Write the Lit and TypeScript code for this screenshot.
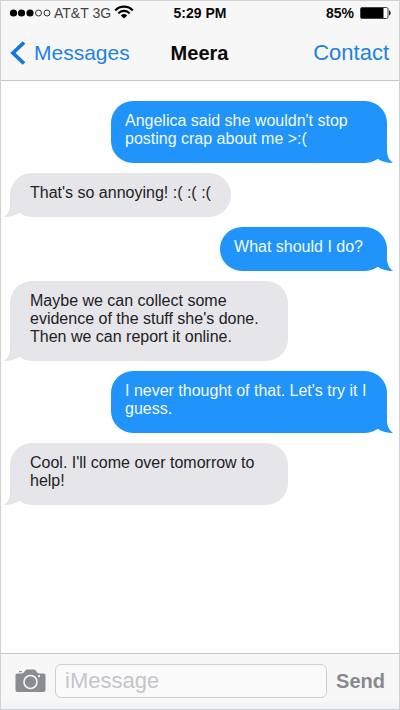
import { LitElement, html, css, svg } from "lit";
import { customElement, property, state } from "lit/decorators.js";
import { classMap } from "lit/directives/class-map.js";

interface Message {
  mine: boolean;
  text: string;
}

const MESSAGES: Message[] = [
  { mine: true, text: "Angelica said she wouldn't stop posting crap about me >:(" },
  { mine: false, text: "That's so annoying! :( :( :(" },
  { mine: true, text: "What should I do?" },
  { mine: false, text: "Maybe we can collect some evidence of the stuff she's done. Then we can report it online." },
  { mine: true, text: "I never thought of that. Let's try it I guess." },
  { mine: false, text: "Cool. I'll come over tomorrow to help!" },
];

/** Messages shorter than this fit on one line. */
const SHORT_LENGTH = 30;

@customElement("status-bar")
export class StatusBar extends LitElement {
  static styles = css`
    :host {
      display: grid;
      grid-template-columns: 1fr auto 1fr;
      align-items: center;
      height: 24px;
      padding: 0 8px;
      font-size: 14px;
      line-height: 24px;
      color: #0a0a0a;
    }
    .carrier, .power { display: flex; align-items: center; }
    .carrier { gap: 3px; color: #444; white-space: nowrap; }
    .power { justify-content: flex-end; gap: 5px; }
    .time, .power { font-weight: bold; }
    svg { display: block; flex: none; }
  `;

  render() {
    return html`
      <div class="carrier">
        <svg width="42" height="8" viewBox="0 0 42 8" aria-hidden="true">
          ${[4.5, 12.5, 21].map((x) => svg`<circle cx=${x} cy="4" r="3.6" fill="#000" />`)}
          ${[29.5, 38].map((x) => svg`<circle cx=${x} cy="4" r="3" fill="none" stroke="#333" stroke-width="1" />`)}
        </svg>
        <span>AT&amp;T 3G</span>
        <svg width="20" height="16" viewBox="0 0 20 16" aria-hidden="true">
          <g fill="none" stroke="#000" stroke-width="2.1">
            <path d="M1.2 5.4C6 .4 14 .4 18.8 5.4" />
            <path d="M4.3 8.4c3-3.3 8.4-3.3 11.4 0" />
          </g>
          <path d="M6.8 10.4c1.8-1.8 4.6-1.8 6.4 0L10 13.6z" fill="#000" />
        </svg>
      </div>
      <div class="time">5:29 PM</div>
      <div class="power">
        <span>85%</span>
        <svg width="32" height="12" viewBox="0 0 32 12" aria-hidden="true">
          <rect x="1.5" y=".5" width="27.5" height="11" rx="1.5" fill="#fff" stroke="#444" />
          <rect x="2" y="1" width="22.5" height="10" rx=".5" fill="#000" />
          <path d="M30 3.500c2.300.6 2.300 4.400 0 5z" fill="#222" />
        </svg>
      </div>
    `;
  }
}

@customElement("chat-bubble")
export class ChatBubble extends LitElement {
  @property({ type: Boolean, reflect: true }) mine = false;
  @property({ type: Boolean }) short = false;

  static styles = css`
    :host { display: flex; }
    :host([mine]) { justify-content: flex-end; }
    .bubble {
      position: relative;
      box-sizing: border-box;
      max-width: 278px;
      margin: 0;
      padding: 11px 20px 15px;
      border-radius: 22px;
      font-size: 16px;
      line-height: 18px;
      background: #e5e5ea;
      color: #222;
    }
    .mine {
      max-width: 276px;
      padding-left: 14px;
      background: #2094fa;
      color: #f2faff;
    }
    .mine.short { padding-right: 24px; }
    .tail {
      position: absolute;
      bottom: 0;
      left: -6px;
      width: 28px;
      height: 20px;
      fill: #e5e5ea;
    }
    .mine .tail {
      left: auto;
      right: -6px;
      fill: #2094fa;
      transform: scaleX(-1);
    }
  `;

  render() {
    return html`
      <p class=${classMap({ bubble: true, mine: this.mine, short: this.short })}>
        <slot></slot>
        <svg class="tail" viewBox="0 0 28 20" aria-hidden="true">
          <path d="M6 0V7C6 13 4 17 0 20C6 20 11 18.500 15 16L22 4z" />
        </svg>
      </p>
    `;
  }
}

@customElement("app-root")
export class AppRoot extends LitElement {
  @state() private messages = MESSAGES;

  static styles = css`
    :host {
      display: flex;
      flex-direction: column;
      box-sizing: border-box;
      min-height: 100vh;
      border: 1px solid #d2d2d4;
      background: #fff;
      font-family: "Liberation Sans", Arial, sans-serif;
    }
    header { background: #f7f7f7; border-bottom: 1px solid #c6c6c8; }
    nav {
      display: grid;
      grid-template-columns: 1fr auto 1fr;
      align-items: center;
      height: 55px;
      padding: 0 10px 0 9px;
    }
    a {
      display: flex;
      align-items: center;
      gap: 8px;
      color: #1f82e0;
      font-size: 21px;
      line-height: 24px;
      text-decoration: none;
    }
    .contact { justify-self: end; font-size: 22px; }
    h1 { margin: 0; font-size: 20px; line-height: 24px; color: #0a0a0a; }
    main {
      flex: 1;
      display: flex;
      flex-direction: column;
      gap: 10px;
      padding: 20px 12px 20px 9px;
    }
    form {
      display: flex;
      align-items: center;
      box-sizing: border-box;
      height: 56px;
      padding: 0 14px 2px;
      background: linear-gradient(#f7f7f8 85%, #eef2f6);
      border-top: 1px solid #c6c6c8;
    }
    button {
      padding: 0;
      border: 0;
      background: none;
      font: bold 20px/24px "Liberation Sans", Arial, sans-serif;
      color: #88898e;
    }
    svg { display: block; flex: none; }
    input {
      flex: 1;
      min-width: 0;
      box-sizing: border-box;
      height: 34px;
      margin: 0 9px;
      padding: 0 9px;
      border: 1px solid #cfcfd3;
      border-radius: 6px;
      background: #fafafa;
      font: 22px/24px "Liberation Sans", Arial, sans-serif;
      color: #222;
    }
    input::placeholder { color: #c5c5ca; opacity: 1; }
  `;

  render() {
    return html`
      <header>
        <status-bar></status-bar>
        <nav>
          <a href="#messages">
            <svg width="16" height="24" viewBox="0 0 16 24" aria-hidden="true">
              <path d="M14 1.500L3 12l11 10.500" fill="none" stroke="#1377e0" stroke-width="3.800" />
            </svg>
            Messages
          </a>
          <h1>Meera</h1>
          <a class="contact" href="#contact">Contact</a>
        </nav>
      </header>
      <main>
        ${this.messages.map(
          (m) => html`<chat-bubble ?mine=${m.mine} ?short=${m.text.length < SHORT_LENGTH}>${m.text}</chat-bubble>`
        )}
      </main>
      <form @submit=${(e: Event) => e.preventDefault()}>
        <button type="button" aria-label="Camera">
          <svg width="31" height="24" viewBox="0 0 31 24" aria-hidden="true">
            <path d="M2.500 4.500h4.200c1 0 1.700-.5 2.300-1.200L10.300 1.500C10.700.8 11.300.5 12 .5h7c.7 0 1.300.3 1.700 1L22 3.300c.6.700 1.300 1.200 2.300 1.200h4.200c1.300 0 2 .8 2 2V21c0 1.300-.8 2-2 2h-26c-1.300 0-2-.7-2-2V6.500c0-1.200.7-2 2-2z" fill="#8b8c91" />
            <rect x="4" y="2" width="3" height="1.300" rx=".5" fill="#8b8c91" />
            <circle cx="15.500" cy="13" r="6.500" fill="none" stroke="#f7f7f8" stroke-width="1.600" />
            <circle cx="24" cy="7.200" r="1.100" fill="#f7f7f8" />
          </svg>
        </button>
        <input type="text" aria-label="Message" placeholder="iMessage" />
        <button type="submit">Send</button>
      </form>
    `;
  }
}
